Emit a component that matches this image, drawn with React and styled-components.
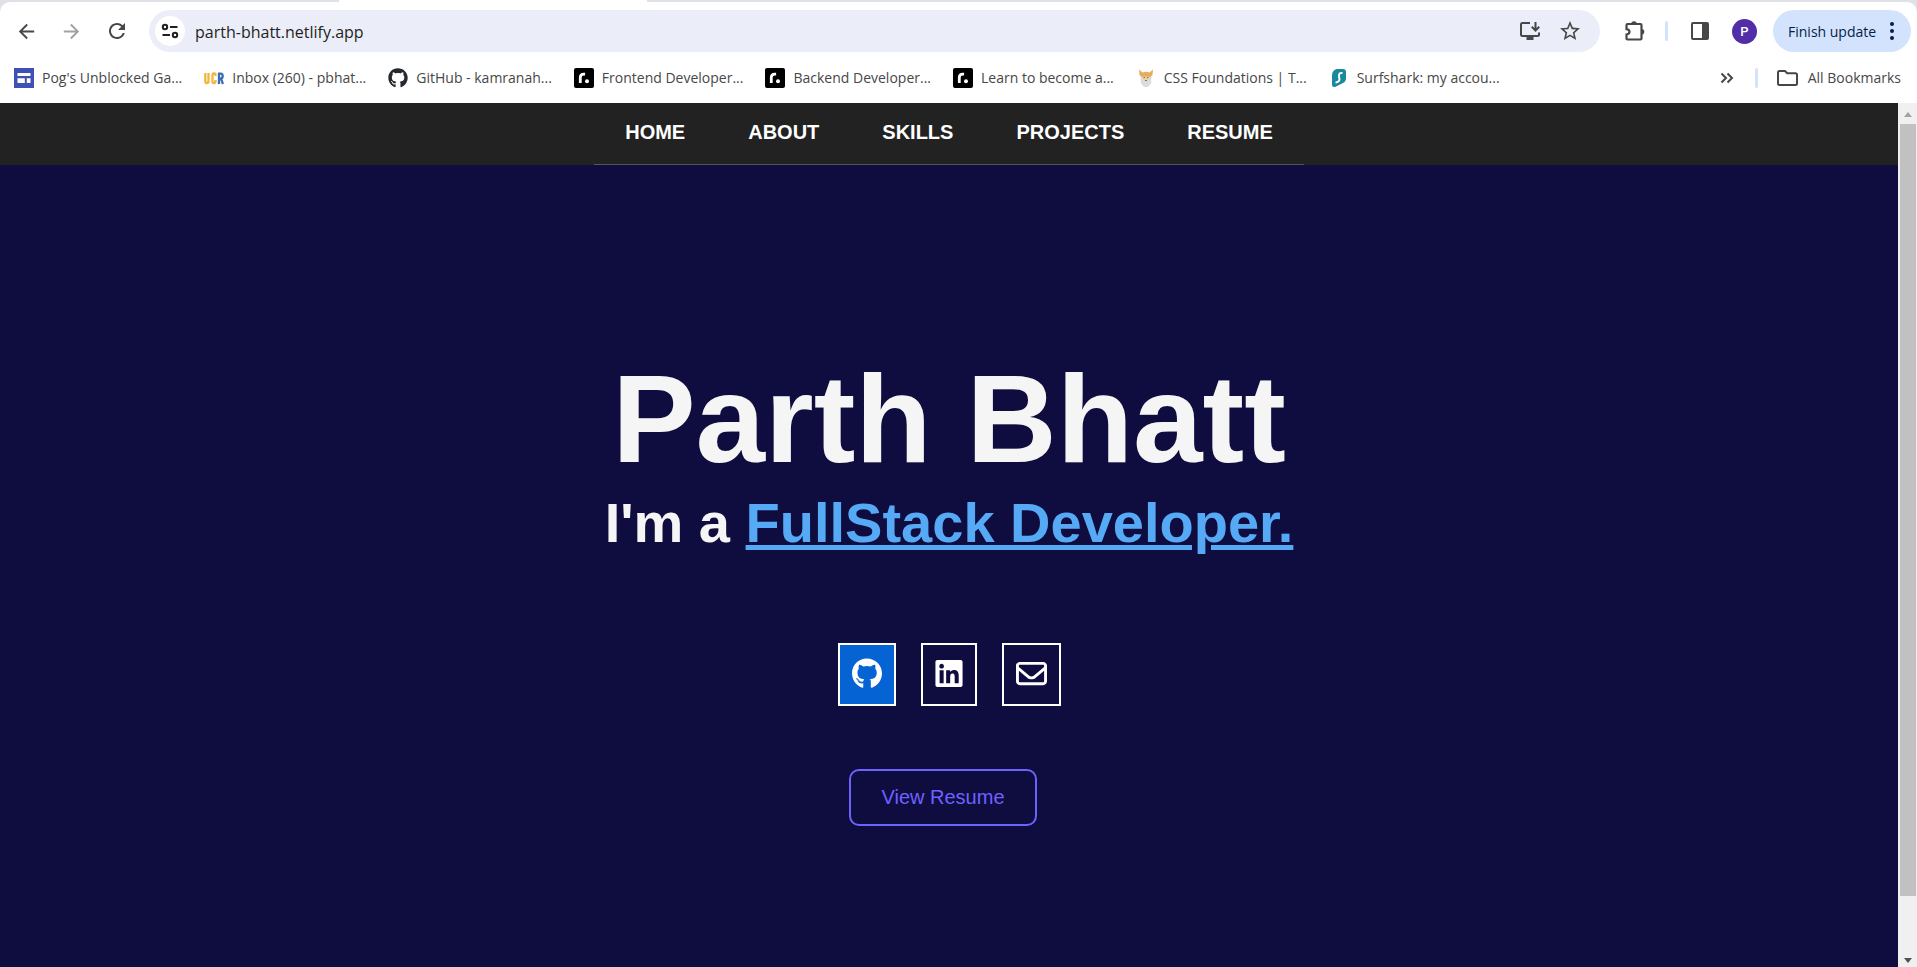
import React from "react";
import styled, { createGlobalStyle } from "styled-components";
import { MdArrowBack, MdArrowForward, MdRefresh, MdStarOutline } from "react-icons/md";
import { FaGithub, FaLinkedin, FaRegEnvelope } from "react-icons/fa6";

const GlobalStyle = createGlobalStyle`
  *, *::before, *::after { box-sizing: border-box; }
  body { margin: 0; background: #0f0c3f; font-family: "Liberation Sans", Arial, sans-serif; }
  a { color: inherit; text-decoration: none; }
  button { border: 0; padding: 0; background: none; color: inherit; font: inherit; cursor: pointer; }
  svg { display: block; flex: none; }
`;

const Frame = styled.div`
  min-height: 100vh;
  display: flex;
  flex-direction: column;
`;

/* Browser chrome */
const Browser = styled.header`
  background: #dee1e6;
  color: #474747;
  font-family: "Open Sans", "Noto Sans", sans-serif;
`;

const TabStrip = styled.div`
  height: 2px;
  padding-left: 339px;
`;

const ActiveTab = styled.div`
  width: 308px;
  height: 2px;
  background: #fff;
`;

const Chrome = styled.div`
  background: #fff;
  border-radius: 10px 10px 0 0;
`;

const Toolbar = styled.div`
  display: flex;
  align-items: center;
  height: 58px;
  padding: 0 6px 0 4px;
`;

const ToolButton = styled.button`
  display: flex;
  align-items: center;
  justify-content: center;
  flex: none;
  width: 45px;
  height: 42px;
  opacity: ${(p) => (p.disabled ? 0.5 : 1)};
`;

const Omnibox = styled.div`
  flex: 1;
  min-width: 0;
  display: flex;
  align-items: center;
  height: 42px;
  margin: 0 12px 0 10px;
  padding: 0 10px 0 6px;
  border-radius: 21px;
  background: #ebeef8;
`;

const SiteButton = styled.button`
  display: flex;
  align-items: center;
  justify-content: center;
  flex: none;
  width: 30px;
  height: 30px;
  border-radius: 50%;
  background: #fff;
`;

const Address = styled.input`
  flex: 1;
  min-width: 0;
  border: 0;
  outline: 0;
  padding: 1px 0 0 10px;
  background: none;
  color: #1f1f1f;
  font: 16px/24px "Open Sans", "Noto Sans", sans-serif;
`;

const OmniButton = styled(ToolButton)`
  width: 40px;
`;

const Divider = styled.span`
  flex: none;
  width: 3px;
  height: 20px;
  margin: 0 9px 0 8px;
  border-radius: 2px;
  background: #d3e3fd;
`;

const Avatar = styled.span`
  display: flex;
  align-items: center;
  justify-content: center;
  width: 25px;
  height: 25px;
  border-radius: 50%;
  background: #512da8;
  color: #fff;
  font: 500 13px/25px Roboto, sans-serif;
`;

const UpdateButton = styled.button`
  display: flex;
  align-items: center;
  justify-content: space-between;
  flex: none;
  width: 138px;
  height: 42px;
  margin-left: 6px;
  padding: 0 17px 0 15px;
  border-radius: 21px;
  background: #d3e3fd;
  color: #041e49;
  font-size: 14px;
  white-space: nowrap;
`;

const BookmarkBar = styled.nav`
  display: flex;
  align-items: center;
  height: 43px;
  padding: 0 16px 7px 14px;
  font-size: 14px;
  line-height: 20px;
  white-space: nowrap;
`;

const BookmarkList = styled.div`
  flex: 1;
  min-width: 0;
  display: flex;
  gap: 22px;
  overflow: hidden;
`;

const Bookmark = styled.a`
  display: flex;
  align-items: center;
  flex: none;
  gap: 8px;
`;

const MoreButton = styled(ToolButton)`
  width: 40px;
  height: 24px;
`;

const AllBookmarks = styled(Bookmark)`
  gap: 10px;
  padding-left: 10px;
`;

/* Web page */
const Viewport = styled.div`
  flex: 1;
  display: flex;
`;

const Page = styled.div`
  flex: 1;
  min-width: 0;
  display: flex;
  flex-direction: column;
  background: #0f0c3f;
`;

const SiteHeader = styled.div`
  display: flex;
  justify-content: center;
  height: 62px;
  background: #222;
`;

const SiteNav = styled.nav`
  display: flex;
  gap: 1px;
  border-bottom: 1px solid #555;
`;

const NavLink = styled.a`
  padding: 17px 31px 0;
  color: #fff;
  font-size: 20px;
  font-weight: 700;
  line-height: 24px;
`;

const Hero = styled.main`
  flex: 1;
  display: flex;
  flex-direction: column;
  align-items: center;
  padding: 182px 24px 96px;
  color: #f5f5f5;
`;

const Name = styled.h1`
  margin: 0;
  font-size: 125px;
  line-height: 144px;
  text-align: center;
`;

const Role = styled.h2`
  margin: 0;
  font-size: 56px;
  line-height: 64px;
  text-align: center;
`;

const RoleName = styled.span`
  color: #55a9f5;
  text-decoration: underline;
`;

const Socials = styled.div`
  display: flex;
  gap: 25px;
  margin-top: 88px;
`;

const SocialLink = styled.a`
  display: flex;
  align-items: center;
  height: 63px;
  padding: 0 12px 2px;
  border: 2px solid #fff;
  background: ${(p) => (p.$active ? "#0563d4" : "transparent")};
  color: #fff;

  svg {
    width: ${(p) => p.$iconWidth}px;
    height: 31px;
  }
`;

const ResumeButton = styled.button`
  height: 57px;
  margin: 63px 12px 0 0;
  padding: 0 30px 2px;
  border: 2px solid #6c63ff;
  border-radius: 10px;
  color: #6c63ff;
  font-size: 20px;
  line-height: 24px;
`;

const Scrollbar = styled.div`
  flex: none;
  display: flex;
  flex-direction: column;
  align-items: center;
  width: 19px;
  padding: 9px 0 4px;
  background: #f0f0f0;
`;

const Track = styled.div`
  flex: 1;
  width: 16px;
  margin: 7px 0 4px;
`;

const Thumb = styled.div`
  height: 93%;
  background: #c1c1c1;
`;

const TuneIcon = () => (
  <svg width="18" height="18" viewBox="0 0 18 18" fill="none" stroke="#1f1f1f" strokeWidth="2">
    <circle cx="4" cy="5" r="2.2" />
    <path d="M9 5h7.500M1.500 13H9" />
    <circle cx="14" cy="13" r="2.200" />
  </svg>
);

const InstallIcon = () => (
  <svg width="22" height="20" viewBox="0 0 22 20" fill="none" stroke="currentColor" strokeWidth="2">
    <path d="M11 2H3.500Q2 2 2 3.500v10Q2 15 3.500 15h15q1.500 0 1.500-1.500V11.500" />
    <path d="M16.500 1v8M12.800 5.800l3.700 3.700 3.700-3.700" />
    <path d="M7.500 17.500h7" strokeWidth="3" />
  </svg>
);

const PuzzleIcon = () => (
  <svg width="24" height="24" viewBox="0 0 24 24" fill="none">
    <path
      d="M4.500 5h13q1 0 1 1v13.500q0 1-1 1h-13q-1 0-1-1v-4q3-.500 3-2.700t-3-2.700V6q0-1 1-1Z"
      stroke="currentColor"
      strokeWidth="2.200"
    />
    <path d="M8.200 5a2.800 2.800 0 0 1 5.600 0ZM18.500 10a2.800 2.800 0 0 1 0 5.600Z" fill="currentColor" />
  </svg>
);

const PanelIcon = () => (
  <svg width="20" height="20" viewBox="0 0 20 20">
    <rect x="2" y="2" width="16" height="16" rx="1" fill="none" stroke="currentColor" strokeWidth="2" />
    <path d="M12 2h6v16h-6z" fill="currentColor" />
  </svg>
);

const DotsIcon = () => (
  <svg width="4" height="18" viewBox="0 0 4 18" fill="currentColor">
    <circle cx="2" cy="2" r="2" />
    <circle cx="2" cy="9" r="2" />
    <circle cx="2" cy="16" r="2" />
  </svg>
);

const ChevronsIcon = () => (
  <svg width="14" height="12" viewBox="0 0 14 12" fill="none" stroke="currentColor" strokeWidth="2">
    <path d="M1.500 1.500 6 6l-4.500 4.500M7.500 1.500 12 6l-4.500 4.500" />
  </svg>
);

const FolderIcon = () => (
  <svg width="21" height="16" viewBox="0 0 21 16" fill="none" stroke="currentColor" strokeWidth="2">
    <path d="M2.500 1H8l2.200 2.300h8.300Q20 3.300 20 4.800v8.700q0 1.500-1.500 1.500h-16Q1 15 1 13.500v-11Q1 1 2.500 1Z" />
  </svg>
);

const SitesIcon = () => (
  <svg width="20" height="20" viewBox="0 0 20 20">
    <path d="M0 0h20v20H0z" fill="#3f51b5" />
    <path d="M3.500 5h13v3h-13zM3.500 10.200h7.300V15H3.500zM12.800 10.200h3.700V15h-3.700z" fill="#fff" />
  </svg>
);

const UcrIcon = () => (
  <svg width="20" height="20" viewBox="0 0 20 20" fill="none" strokeWidth="2.300">
    <path d="M1.300 5v8.500q0 1.500 1.600 1.500t1.600-1.500V5M11.500 8V6.800Q11.500 5.500 10 5.500T8.500 7v6.500Q8.500 15 10 15t1.500-1.500V12" stroke="#f0b73a" />
    <path d="M15 16V5.700h1.700q2 0 2 2.400T16.700 10.700H15M17 10.700l2 5.300" stroke="#3a6db4" />
  </svg>
);

const RoadmapIcon = () => (
  <svg width="20" height="20" viewBox="0 0 20 20">
    <rect width="20" height="20" rx="2" fill="#000" />
    <path d="M6.300 15V9.500q0-3.300 3.500-3.300h1.300" fill="none" stroke="#fff" strokeWidth="2.800" />
    <circle cx="13" cy="13.200" r="2" fill="#fff" />
  </svg>
);

const OdinIcon = () => (
  <svg width="20" height="20" viewBox="0 0 20 20">
    <path d="M4.500 9h11l-.500 6.500L12 19H8l-3-3.500Z" fill="#dcdcde" />
    <path d="M3 1.500 6.500 4.500Q10 3 13.500 4.500L17 1.500 16.500 7 14.500 9h-9L3.500 7Z" fill="#e5ad5d" />
    <path d="M6.500 8.500h7V11l-3.500 1.500L6.500 11Z" fill="#f0cda2" />
    <path d="M7.500 9.500H9M11 9.500h1.500M9 12.500h2" stroke="#7c746d" />
  </svg>
);

const SurfsharkIcon = () => (
  <svg width="20" height="20" viewBox="0 0 20 20">
    <path d="M8 1h6q3 0 3 3v6q0 3.500-3 5l-7.500 3.800Q3 20 3 16.500V7.500Q3 2 8 1Z" fill="#178a9e" />
    <path d="M13.500 5q-3.500-.500-3.500 2.500 0 2 .500 3.500 0 3-4 3.500" fill="none" stroke="#fff" strokeWidth="2" />
  </svg>
);

const bookmarks = [
  { title: "Pog's Unblocked Ga...", icon: <SitesIcon /> },
  { title: "Inbox (260) - pbhat...", icon: <UcrIcon /> },
  { title: "GitHub - kamranah...", icon: <FaGithub size={20} color="#24292f" /> },
  { title: "Frontend Developer...", icon: <RoadmapIcon /> },
  { title: "Backend Developer...", icon: <RoadmapIcon /> },
  { title: "Learn to become a...", icon: <RoadmapIcon /> },
  { title: "CSS Foundations | T...", icon: <OdinIcon /> },
  { title: "Surfshark: my accou...", icon: <SurfsharkIcon /> },
];

const sections = ["HOME", "ABOUT", "SKILLS", "PROJECTS", "RESUME"];

export default function App() {
  return (
    <Frame>
      <GlobalStyle />
      <Browser>
        <TabStrip>
          <ActiveTab />
        </TabStrip>
        <Chrome>
          <Toolbar>
            <ToolButton aria-label="Back"><MdArrowBack size={23} /></ToolButton>
            <ToolButton aria-label="Forward" disabled><MdArrowForward size={23} /></ToolButton>
            <ToolButton aria-label="Reload"><MdRefresh size={24} /></ToolButton>
            <Omnibox>
              <SiteButton aria-label="Site information"><TuneIcon /></SiteButton>
              <Address aria-label="Address" defaultValue="parth-bhatt.netlify.app" />
              <OmniButton aria-label="Install app"><InstallIcon /></OmniButton>
              <OmniButton aria-label="Bookmark this page"><MdStarOutline size={24} /></OmniButton>
            </Omnibox>
            <ToolButton aria-label="Extensions"><PuzzleIcon /></ToolButton>
            <Divider />
            <ToolButton aria-label="Side panel"><PanelIcon /></ToolButton>
            <ToolButton aria-label="Profile"><Avatar>P</Avatar></ToolButton>
            <UpdateButton>
              Finish update
              <DotsIcon />
            </UpdateButton>
          </Toolbar>
          <BookmarkBar aria-label="Bookmarks">
            <BookmarkList>
              {bookmarks.map((b) => (
                <Bookmark key={b.title} href="#">
                  {b.icon}
                  {b.title}
                </Bookmark>
              ))}
            </BookmarkList>
            <MoreButton aria-label="More bookmarks"><ChevronsIcon /></MoreButton>
            <Divider />
            <AllBookmarks href="#">
              <FolderIcon />
              All Bookmarks
            </AllBookmarks>
          </BookmarkBar>
        </Chrome>
      </Browser>
      <Viewport>
        <Page>
          <SiteHeader>
            <SiteNav aria-label="Main">
              {sections.map((s) => (
                <NavLink key={s} href={`#${s.toLowerCase()}`}>{s}</NavLink>
              ))}
            </SiteNav>
          </SiteHeader>
          <Hero>
            <Name>Parth Bhatt</Name>
            <Role>
              I'm a <RoleName>FullStack Developer.</RoleName>
            </Role>
            <Socials>
              <SocialLink href="#github" aria-label="GitHub" $iconWidth={30} $active><FaGithub /></SocialLink>
              <SocialLink href="#linkedin" aria-label="LinkedIn" $iconWidth={28}><FaLinkedin /></SocialLink>
              <SocialLink href="#email" aria-label="Email" $iconWidth={31}><FaRegEnvelope /></SocialLink>
            </Socials>
            <ResumeButton>View Resume</ResumeButton>
          </Hero>
        </Page>
        <Scrollbar aria-hidden="true">
          <svg width="8" height="5" viewBox="0 0 8 5"><path d="M0 5 4 0l4 5Z" fill="#a3a3a3" /></svg>
          <Track><Thumb /></Track>
          <svg width="8" height="5" viewBox="0 0 8 5"><path d="M0 0h8L4 5Z" fill="#505050" /></svg>
        </Scrollbar>
      </Viewport>
    </Frame>
  );
}
